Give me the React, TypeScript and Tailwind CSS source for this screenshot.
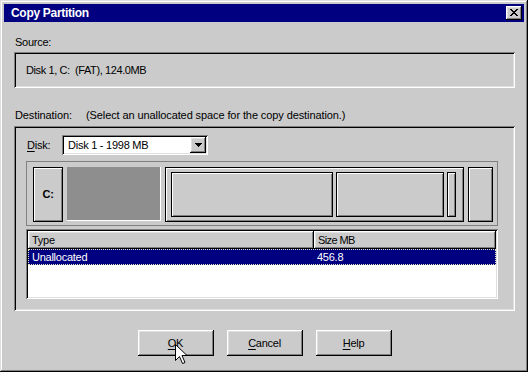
import React from "react";

const raised =
  "shadow-[inset_-1px_-1px_0_#000,inset_1px_1px_0_#fff,inset_-2px_-2px_0_#808080,inset_2px_2px_0_#dfdfdf]";
const sunken =
  "shadow-[inset_1px_1px_0_#808080,inset_-1px_-1px_0_#fff,inset_2px_2px_0_#000,inset_-2px_-2px_0_#dfdfdf]";
const framed =
  "border border-black shadow-[inset_1px_1px_0_#fff,inset_-1px_-1px_0_#808080]";

function CloseBtn() {
  const px: [number, number][] = [];
  const rows = [
    "XX....XX",
    ".XX..XX.",
    "..XXXX..",
    "...XX...",
    "..XXXX..",
    ".XX..XX.",
    "XX....XX",
  ];
  rows.forEach((r, y) =>
    r.split("").forEach((c, x) => {
      if (c === "X") px.push([x, y]);
    })
  );
  return (
    <div className={`w-[16px] h-[14px] bg-[#cbcbcb] ${raised} relative`}>
      <svg width="8" height="7" className="absolute left-[4px] top-[3px]" shapeRendering="crispEdges">
        {px.map(([x, y]) => (
          <rect key={`${x}-${y}`} x={x} y={y} width="1" height="1" fill="#000" />
        ))}
      </svg>
    </div>
  );
}

function Button({ u, rest }: { u: string; rest: string }) {
  return (
    <div className={`w-[76px] h-[26px] bg-[#cbcbcb] ${raised} flex items-center justify-center`}>
      <span>
        <span className="underline underline-offset-[2px]">{u}</span>
        {rest}
      </span>
    </div>
  );
}

export default function App() {
  return (
    <div
      className={`relative w-[528px] h-[372px] bg-[#cbcbcb] p-[4px] shadow-[inset_-1px_-1px_0_#000,inset_1px_1px_0_#dfdfdf,inset_-2px_-2px_0_#808080,inset_2px_2px_0_#fff] font-['Liberation_Sans',Arial,sans-serif] text-[11px] tracking-[-0.25px] text-black leading-[13px]`}
    >
      {/* Title bar */}
      <div className="h-[18px] bg-[#000080] flex items-center justify-between pl-[7px] pr-[2px]">
        <span className="text-white font-bold text-[12px] tracking-[-0.3px]">Copy Partition</span>
        <CloseBtn />
      </div>

      <div className="pl-[10px] pr-[9px]">
        <div className="mt-[14px] h-[13px] pl-px">Source:</div>
        <div className={`mt-[3px] h-[36px] ${sunken} flex items-center pl-[12px] whitespace-pre tracking-[-0.4px]`}>
          Disk 1, C:  (FAT), 124.0MB
        </div>

        <div className="mt-[21px] h-[13px] pl-px flex tracking-[-0.1px]">
          <span className="w-[71px]">Destination:</span>
          <span>(Select an unallocated space for the copy destination.)</span>
        </div>

        {/* Group */}
        <div className={`mt-[4px] h-[185px] ${sunken} p-[2px]`}>
          <div className="pt-[7px] pl-[11px] flex items-center">
            <span className="w-[35px]">
              <span className="underline underline-offset-[2px]">D</span>isk:
            </span>
            <div className={`w-[146px] h-[20px] ${sunken} p-[2px] flex`}>
              <div className="flex-1 bg-white flex items-center pl-[4px]">Disk 1 - 1998 MB</div>
              <div className={`w-[16px] h-[16px] bg-[#cbcbcb] ${raised} flex items-center justify-center`}>
                <svg width="7" height="4" shapeRendering="crispEdges">
                  <rect x="0" y="0" width="7" height="1" fill="#000" />
                  <rect x="1" y="1" width="5" height="1" fill="#000" />
                  <rect x="2" y="2" width="3" height="1" fill="#000" />
                  <rect x="3" y="3" width="1" height="1" fill="#000" />
                </svg>
              </div>
            </div>
          </div>

          {/* Partition map */}
          <div className="mt-[6px] ml-[10px] w-[472px] h-[65px] border border-[#808080] pt-[5px] pl-[6px] flex items-start gap-[4px]">
            <div className={`w-[30px] h-[55px] ${framed} flex items-center justify-center font-bold`}>C:</div>
            <div className="w-[94px] h-[54px] bg-[#8e8e8e] border-r border-b border-white" />
            <div className={`w-[299px] h-[55px] ${framed} flex items-start pt-[4px] pl-[5px] gap-[3px]`}>
              <div className={`w-[162px] h-[45px] ${framed}`} />
              <div className={`w-[108px] h-[45px] ${framed}`} />
              <div className={`w-[9px] h-[45px] ${framed}`} />
            </div>
            <div className={`w-[25px] h-[55px] ${framed}`} />
          </div>

          {/* List */}
          <div className={`mt-[3px] ml-[10px] w-[472px] h-[70px] ${sunken} p-[2px]`}>
            <div className="h-full bg-white flex flex-col">
              <div className="flex h-[18px]">
                <div className={`w-[286px] bg-[#cbcbcb] ${raised} pl-[4px] flex items-center`}>Type</div>
                <div className={`flex-1 bg-[#cbcbcb] ${raised} pl-[4px] flex items-center tracking-[-0.6px]`}>
                  Size MB
                </div>
              </div>
              <div className="h-[16px] bg-[#000080] text-white flex items-center border border-dotted border-[#e8e8c0]">
                <span className="w-[285px] pl-[3px]">Unallocated</span>
                <span className="pl-[3px]">456.8</span>
              </div>
            </div>
          </div>
        </div>

        <div className="mt-[19px] flex justify-center gap-[13px]">
          <Button u="O" rest="K" />
          <Button u="C" rest="ancel" />
          <Button u="H" rest="elp" />
        </div>
      </div>

      {/* Mouse cursor */}
      <svg className="absolute left-[175px] top-[344px]" width="13" height="21" viewBox="0 0 13 21">
        <path
          d="M0.5 0.5 L0.5 16.5 L4.5 12.5 L7.5 19.5 L10 18.5 L7 11.5 L12 11.5 Z"
          fill="#fff"
          stroke="#000"
          strokeWidth="1"
          strokeLinejoin="miter"
        />
      </svg>
    </div>
  );
}
